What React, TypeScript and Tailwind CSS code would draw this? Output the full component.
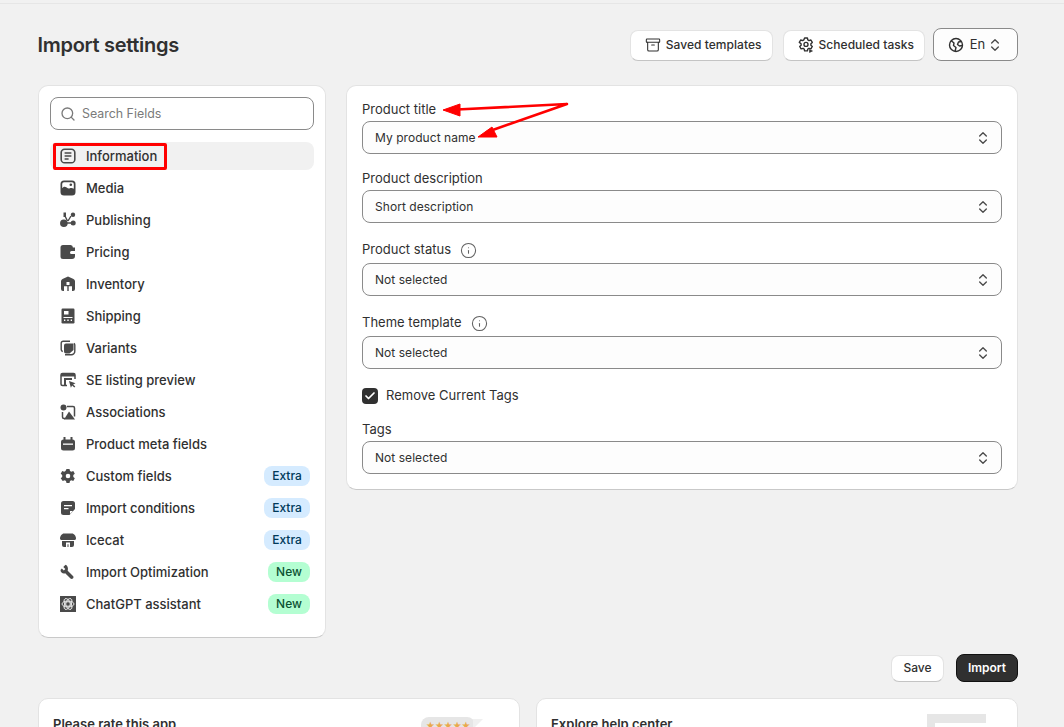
import type { ReactNode } from 'react'
import { Search, ChevronsUpDown, Check, Info, Archive } from 'lucide-react'

const ic = 'w-4 h-4 shrink-0'

// Filled menu icons, drawn on a 16 box
const icons: Record<string, ReactNode> = {
  information: (
    <svg viewBox="0 0 16 16" className={ic} fill="none">
      <rect x="1.200" y="1.200" width="13.600" height="13.600" rx="3.400" stroke="#4a4a4a" strokeWidth="1.600" />
      <path d="M4.600 5h6.800M4.600 8h6.800M4.600 11h4" stroke="#4a4a4a" strokeWidth="1.500" />
    </svg>
  ),
  media: (
    <svg viewBox="0 0 16 16" className={ic}>
      <rect x="0.500" y="0.500" width="15" height="15" rx="3.500" fill="#444" />
      <path fill="#fff" d="M4 2.200h8A1.800 1.800 0 0 1 13.800 4v4.800c-1.400-1-2.700-1.200-4-.5C8 9.200 6.200 6.800 4.600 6.800c-1 0-1.800.7-2.400 1.500V4A1.800 1.800 0 0 1 4 2.200Z" />
      <circle cx="10.800" cy="4.800" r="1.300" fill="#444" />
    </svg>
  ),
  publishing: (
    <svg viewBox="0 0 16 16" className={ic} fill="#4a4a4a">
      <path d="M3.500 0.500h2.500v4.500h-2.500z" />
      <circle cx="13" cy="2.800" r="2.200" />
      <circle cx="13.200" cy="11" r="2.500" />
      <path d="M3.800 7.500a3.800 3.800 0 1 0 0.100 7.600 3.800 3.800 0 0 0-0.100-7.600Z" />
      <path d="M5 4l2.500 5M8 9l3-5M7 11h4" stroke="#4a4a4a" strokeWidth="1.400" />
    </svg>
  ),
  pricing: (
    <svg viewBox="0 0 16 16" className={ic}>
      <path fill="#4a4a4a" d="M3 1h7.500a2.500 2.500 0 0 1 2.400 2.500H15V7h-3.500a1.500 1.500 0 0 0 0 3H15v2a3 3 0 0 1-3 3H3a2.500 2.500 0 0 1-2.500-2.500v-9A2.500 2.500 0 0 1 3 1Z" />
      <path fill="#fff" d="M11 8h3.500v1.200H11z" />
    </svg>
  ),
  inventory: (
    <svg viewBox="0 0 16 16" className={ic}>
      <path fill="#4a4a4a" d="M8 0.500 13.500 3a2.500 2.500 0 0 1 1.500 2.300V13a2 2 0 0 1-2 2H3a2 2 0 0 1-2-2V5.300A2.500 2.500 0 0 1 2.500 3Z" />
      <path fill="#fff" d="M6.500 6h3v3h-3zM4 10.300h3.300V15H4zM8.700 10.300H12V15H8.700z" />
    </svg>
  ),
  shipping: (
    <svg viewBox="0 0 16 16" className={ic}>
      <rect x="1.500" y="0.500" width="13" height="15" rx="1.200" fill="#4a4a4a" />
      <path fill="#fff" d="M4 3h4.500v3.500H4zM3.500 9h9v1h-9zM4 11.500h1.300V13H4zM7.300 11.500h1.400V13H7.300zM10.700 11.500H12V13h-1.300z" />
    </svg>
  ),
  variants: (
    <svg viewBox="0 0 16 16" className={ic} fill="none">
      <path stroke="#4a4a4a" strokeWidth="1.400" d="M2.800 11.500A2 2 0 0 1 1.200 9.500V3.200a2 2 0 0 1 2-2H10" />
      <path stroke="#4a4a4a" strokeWidth="1.400" d="M5 14.800h6a3.500 3.500 0 0 0 3.800-3.800V5a2 2 0 0 0-.8-1.600" />
      <path fill="#4a4a4a" d="M6 3.500h7.500v6.500l-4 3.500H6a2 2 0 0 1-2-2V5.500a2 2 0 0 1 2-2Z" />
    </svg>
  ),
  preview: (
    <svg viewBox="0 0 16 16" className={ic} fill="none">
      <path stroke="#4a4a4a" strokeWidth="1.500" d="M15 7V3a1.500 1.500 0 0 0-1.500-1.500h-11A1.500 1.500 0 0 0 1 3v9a1.500 1.500 0 0 0 1.500 1.500H7" />
      <path fill="#4a4a4a" d="M1 2h14v2.500H1zM4 6h8v2H6v6H4z" />
      <path fill="#4a4a4a" d="M9 9l6.500 2.200-2.400 1.200 2.200 2.200-1 1-2.200-2.200-1.200 2.300z" />
    </svg>
  ),
  associations: (
    <svg viewBox="0 0 16 16" className={ic} fill="none">
      <circle cx="3.500" cy="3.500" r="3" fill="#4a4a4a" />
      <path stroke="#4a4a4a" strokeWidth="1.500" d="M7 2.500h6a1.500 1.500 0 0 1 1.500 1.500v8.500M2.500 8v5a1.500 1.500 0 0 0 1.500 1.500h1" />
      <path fill="#4a4a4a" d="M4 15.500l5-8 6 8z" />
    </svg>
  ),
  meta: (
    <svg viewBox="0 0 16 16" className={ic}>
      <path fill="#4a4a4a" d="M3.500 1h2v2.500h5V1h2v2.500A2.500 2.500 0 0 1 15 6v6a2.500 2.500 0 0 1-2.500 2.500h-9A2.500 2.500 0 0 1 1 12V6a2.500 2.500 0 0 1 2.500-2.500Z" />
      <path fill="#fff" d="M3 7.500h10v1.300H3z" />
    </svg>
  ),
  custom: (
    <svg viewBox="0 0 16 16" className={ic}>
      <path fillRule="evenodd" fill="#4a4a4a" d="M6.500 1h3l.5 2 1.300.7 2-.6 1.500 2.600-1.500 1.400v1.800l1.500 1.400-1.500 2.600-2-.6-1.300.7-.5 2h-3l-.5-2-1.300-.7-2 .6L.7 10.300l1.500-1.400V7.100L.7 5.700l1.500-2.600 2 .6L5.500 3ZM8 5.700a2.300 2.300 0 1 0 0 4.600 2.300 2.300 0 0 0 0-4.600Z" />
    </svg>
  ),
  conditions: (
    <svg viewBox="0 0 16 16" className={ic}>
      <path fill="#4a4a4a" d="M3.500 1h9A2.500 2.500 0 0 1 15 3.500V9l-5.500 6h-6A2.500 2.500 0 0 1 1 12.500v-9A2.500 2.500 0 0 1 3.500 1Z" />
      <path fill="#fff" d="M4 5h8v1.300H4zM4 8h4.500v1.300H4zM10 11h3l-3 3z" />
    </svg>
  ),
  icecat: (
    <svg viewBox="0 0 16 16" className={ic}>
      <path fill="#4a4a4a" d="M4 1.500h8c2 0 4 2.500 4 5 0 1-1 1.500-2 1.500H2C1 8 0 7.500 0 6.500c0-2.500 2-5 4-5Z" />
      <path fill="#4a4a4a" d="M2 9h12v4a2 2 0 0 1-2 2H4a2 2 0 0 1-2-2Z" />
      <path fill="#fff" d="M6 10.500h4V15H6z" />
      <path fill="#4a4a4a" d="M7.500 12.200h1V15h-1z" />
    </svg>
  ),
  wrench: (
    <svg viewBox="0 0 16 16" className={ic}>
      <path fill="#4a4a4a" d="M5.500 0.800 3.300 3l2 2-1.500 1.500-2-2L.5 6c0 2.500 2.500 4 4.700 3.200l5.300 5.300a1.800 1.800 0 0 0 3-1.200c0-.6-.2-1-.5-1.300L7.700 6.800C8.500 4 7.500 1.500 5.500 0.800Z" />
    </svg>
  ),
  chatgpt: (
    <svg viewBox="0 0 16 16" className={ic}>
      <rect x="-0.500" y="-0.500" width="17" height="17" rx="2.500" fill="#4a4a4a" />
      <g fill="none" stroke="#fff" strokeWidth="0.800">
        <circle cx="8" cy="8" r="2.300" />
        <ellipse cx="8" cy="8" rx="6" ry="3" />
        <ellipse cx="8" cy="8" rx="6" ry="3" transform="rotate(60 8 8)" />
        <ellipse cx="8" cy="8" rx="6" ry="3" transform="rotate(120 8 8)" />
      </g>
    </svg>
  ),
}

const navItems: { label: string; icon: string; badge?: 'Extra' | 'New' }[] = [
  { label: 'Information', icon: 'information' },
  { label: 'Media', icon: 'media' },
  { label: 'Publishing', icon: 'publishing' },
  { label: 'Pricing', icon: 'pricing' },
  { label: 'Inventory', icon: 'inventory' },
  { label: 'Shipping', icon: 'shipping' },
  { label: 'Variants', icon: 'variants' },
  { label: 'SE listing preview', icon: 'preview' },
  { label: 'Associations', icon: 'associations' },
  { label: 'Product meta fields', icon: 'meta' },
  { label: 'Custom fields', icon: 'custom', badge: 'Extra' },
  { label: 'Import conditions', icon: 'conditions', badge: 'Extra' },
  { label: 'Icecat', icon: 'icecat', badge: 'Extra' },
  { label: 'Import Optimization', icon: 'wrench', badge: 'New' },
  { label: 'ChatGPT assistant', icon: 'chatgpt', badge: 'New' },
]

function GearIcon() {
  return (
    <svg viewBox="0 0 16 16" className={ic} fill="none" stroke="#303030" strokeWidth="1.400" strokeLinejoin="round">
      <path d="M6.600 1h2.800l.4 1.900 1.200.7 1.900-.6 1.400 2.400-1.400 1.300v1.500l1.400 1.300-1.400 2.400-1.900-.6-1.200.7-.4 1.900H6.600l-.4-1.900-1.200-.7-1.900.6-1.400-2.400 1.400-1.300V6.700L1.300 5.400l1.400-2.400 1.900.6 1.200-.7Z" />
      <circle cx="8" cy="7.400" r="2" />
      <path d="M11.500 12.500l3 1.500-3 1.500Z" fill="#303030" strokeWidth="0.600" />
    </svg>
  )
}

function GlobeIcon() {
  return (
    <svg viewBox="0 0 16 16" className={ic} fill="none" stroke="#303030" strokeWidth="1.400">
      <circle cx="8" cy="8" r="6.500" />
      <path d="M3 3.500 6 6l-.5 2.500L8 10.500 7 14.500M13.500 4.500 10.500 5 9.500 7.500l2 1.500 3 -.5" strokeLinejoin="round" />
    </svg>
  )
}

function Select({ value }: { value: string }) {
  return (
    <div className="h-[33px] flex items-center justify-between pl-[12px] pr-[10px] bg-[#fdfdfd] border border-[#8a8a8a] rounded-lg text-[12px] tracking-[0.050px] text-[#303030]">
      <span>{value}</span>
      <ChevronsUpDown className="w-4 h-4 text-[#4a4a4a]" strokeWidth={2} />
    </div>
  )
}

function Label({ children, info }: { children: string; info?: boolean }) {
  return (
    <div className="flex items-center gap-[9px] h-[16px] text-[13px] text-[#303030]">
      {children}
      {info && <Info className="w-[17px] h-[17px] text-[#616161]" strokeWidth={1.500} />}
    </div>
  )
}

function TopButton({ icon, children }: { icon: ReactNode; children: string }) {
  return (
    <div className="h-[31px] mt-[2px] pb-[1px] flex items-center gap-[5px] pl-[14px] pr-[10px] bg-white rounded-lg border border-[#e3e3e3] border-b-[#c4c4c4] text-[12px] tracking-[0.040px] font-medium text-[#303030]">
      {icon}
      {children}
    </div>
  )
}

export default function App() {
  return (
    <div className="h-screen overflow-hidden bg-[#f1f1f1] font-['Inter',sans-serif] text-[#303030]">
      <div className="mt-[3px] border-t border-[#e6e6e6]" />
      <div className="relative ml-[38px] w-[980px]">
        {/* header */}
        <div className="flex items-center justify-between pt-[24px] h-[81px] pb-[24px]">
          <h1 className="text-[20px] font-semibold leading-none tracking-[-0.300px] -ml-[0.500px]">Import settings</h1>
          <div className="flex items-center gap-[10px]">
            <TopButton icon={<Archive className="w-4 h-4" strokeWidth={1.600} />}>Saved templates</TopButton>
            <TopButton icon={<GearIcon />}>Scheduled tasks</TopButton>
            <div className="h-[33px] w-[85px] -ml-[2px] flex items-center justify-center bg-[#fdfdfd] border border-[#8a8a8a] rounded-lg text-[13px]">
              <GlobeIcon />
              <span className="ml-[6px] mr-[2px]">En</span>
              <ChevronsUpDown className="w-4 h-4 text-[#4a4a4a]" strokeWidth={2} />
            </div>
          </div>
        </div>

        {/* main */}
        <div className="flex items-start gap-[20px]">
          <div className="w-[288px] h-[553px] shrink-0 bg-white rounded-[10px] border border-[#e3e3e3] border-b-[#c9c9c9] pt-[11px] px-[11px]">
            <div className="h-[33px] flex items-center gap-[6px] pl-[9px] pr-[10px] bg-white border border-[#8a8a8a] rounded-lg text-[12.400px] text-[#7a7a7a]">
              <Search className="w-4 h-4 text-[#7a7a7a]" strokeWidth={2} />
              <span className="pt-[1px]">Search Fields</span>
            </div>
            <div className="mt-[12px] flex flex-col gap-[4px]">
              {navItems.map((item, i) => (
                <div
                  key={item.label}
                  className={`relative h-[28px] flex items-center gap-[10px] pl-[10px] pr-[4px] rounded-lg text-[13px] font-medium ${i === 0 ? 'bg-[#f1f1f1]' : ''}`}
                >
                  {icons[item.icon]}
                  <span className="flex-1 pt-[2px]">{item.label}</span>
                  {item.badge === 'Extra' && (
                    <span className="h-[20px] w-[46px] flex items-center justify-center rounded-lg bg-[#d5ebff] text-[#003a5a] text-[12px]">Extra</span>
                  )}
                  {item.badge === 'New' && (
                    <span className="h-[20px] w-[42px] flex items-center justify-center rounded-lg bg-[#b4fed2] text-[#0c5132] text-[12px]">New</span>
                  )}
                  {i === 0 && <div className="absolute left-[3px] top-[1px] w-[114px] h-[27px] border-[3px] border-[#ff0000] rounded-[2px]" />}
                </div>
              ))}
            </div>
          </div>

          <div className="relative w-[672px] h-[405px] bg-white rounded-[10px] border border-[#e3e3e3] border-b-[#c9c9c9] pt-[16px] px-[15px]">
            <Label>Product title</Label>
            <div className="mt-[3px]"><Select value="My product name" /></div>
            <div className="mt-[17px]"><Label>Product description</Label></div>
            <div className="mt-[3px]"><Select value="Short description" /></div>
            <div className="mt-[19px]"><Label info>Product status</Label></div>
            <div className="mt-[5px]"><Select value="Not selected" /></div>
            <div className="mt-[19px]"><Label info>Theme template</Label></div>
            <div className="mt-[5px]"><Select value="Not selected" /></div>
            <div className="mt-[19px] flex items-center gap-[8px] h-[16px] text-[13px]">
              <span className="w-4 h-4 rounded-[4px] bg-[#303030] flex items-center justify-center">
                <Check className="w-3 h-3 text-white" strokeWidth={3.500} />
              </span>
              Remove Current Tags
            </div>
            <div className="mt-[18px]"><Label>Tags</Label></div>
            <div className="mt-[3px]"><Select value="Not selected" /></div>

            {/* annotation arrows */}
            <svg className="absolute left-[80px] top-[5px] w-[160px] h-[50px]" viewBox="0 0 160 50">
              <g fill="#ff0000" stroke="#ff0000" strokeLinejoin="round">
                <path d="M30 18.500 140 13 60 41" fill="none" strokeWidth="2.600" />
                <path d="M16 19 33 13 33 25Z" strokeWidth="1" />
                <path d="M51 46 65 36 70 46Z" strokeWidth="1" />
              </g>
            </svg>
          </div>
        </div>

        {/* actions */}
        <div className="flex justify-end gap-[12px] mt-[16px]">
          <div className="h-[27px] w-[53px] mt-[1px] pb-[1px] flex items-center justify-center bg-white rounded-lg border border-[#e3e3e3] border-b-[#c4c4c4] text-[12px] font-medium">Save</div>
          <div className="h-[28px] w-[62px] flex items-center justify-center bg-[#303030] rounded-lg border border-[#111] text-[12px] font-semibold text-white">Import</div>
        </div>

        {/* bottom cards */}
        <div className="flex gap-[16px] mt-[16px]">
          <div className="flex-1 h-[120px] bg-white rounded-[10px] border border-[#e3e3e3] pt-[16px] pl-[14px] pr-[15px] flex justify-between">
            <span className="text-[13px] font-semibold">Please rate this app</span>
            <div className="relative mt-[2px] mr-[29px] w-[54px] h-[40px] bg-[#e6e6e6] rounded-lg text-[#e9a94b] text-[9px] tracking-[-0.500px] text-center leading-[18px]">
              ★★★★★
              <div className="absolute left-[52px] top-[2px] w-0 h-0 border-l-[10px] border-l-[#f0f0f0] border-b-[10px] border-b-transparent" />
            </div>
          </div>
          <div className="flex-1 h-[120px] bg-white rounded-[10px] border border-[#e3e3e3] pt-[16px] pl-[14px] pr-[15px] flex justify-between">
            <span className="text-[13px] font-semibold">Explore help center</span>
            <div className="-mt-[1px] mr-[16px] w-[59px] h-[40px] bg-[#e6e6e6] pt-[9px] pl-[8px]">
              <div className="h-full bg-white" />
            </div>
          </div>
        </div>
      </div>
    </div>
  )
}
